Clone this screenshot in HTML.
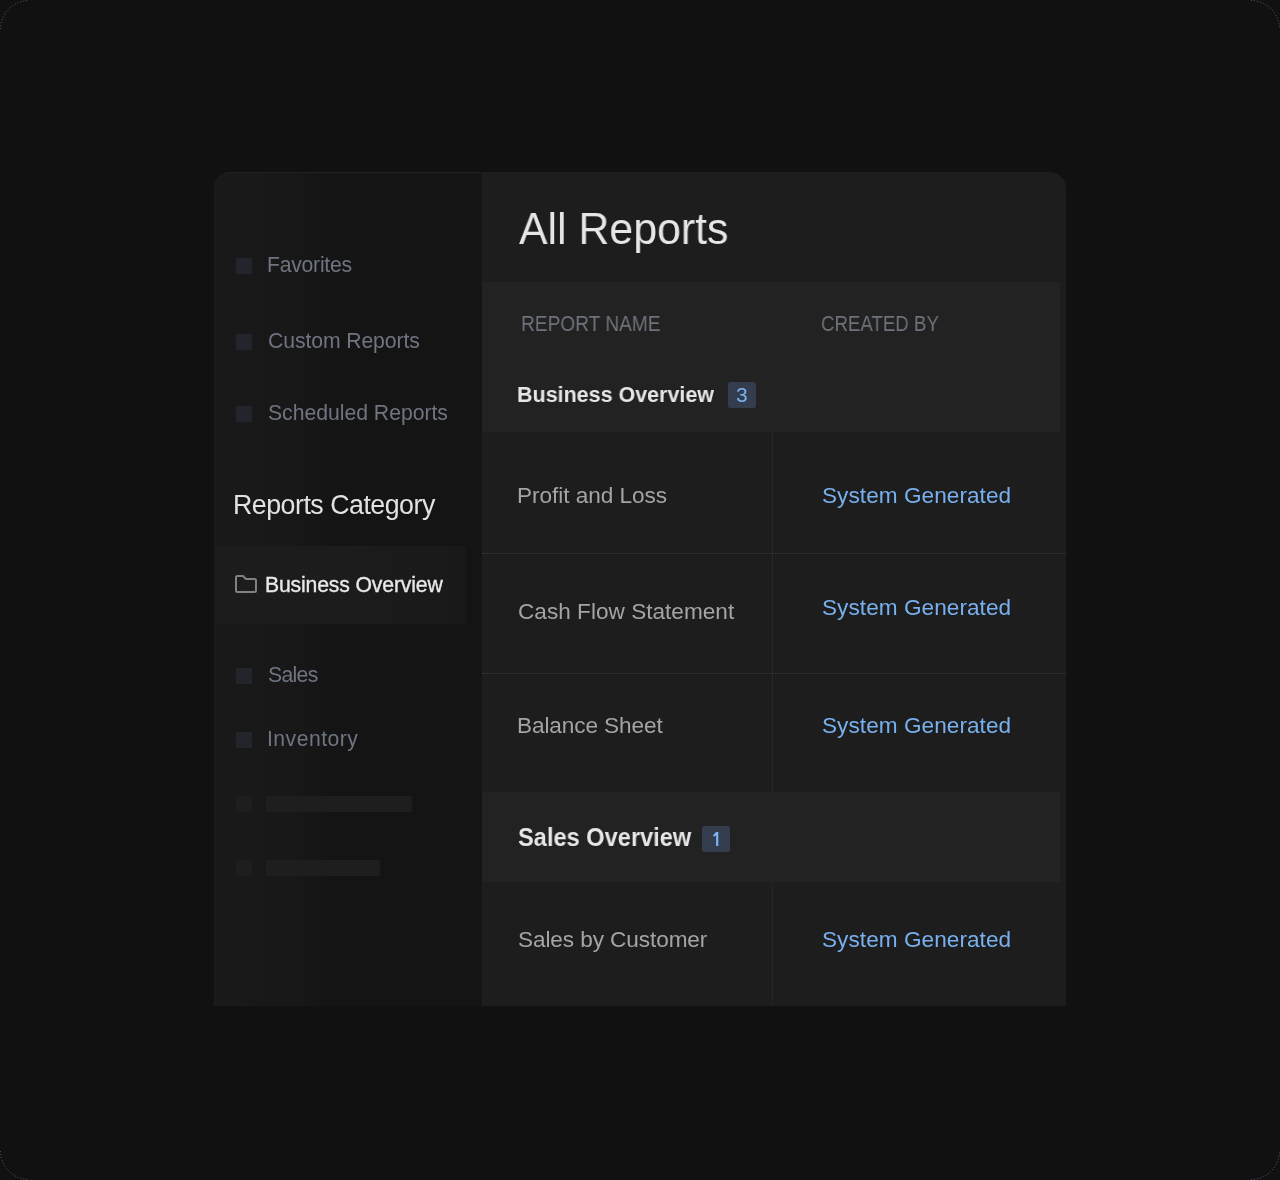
<!DOCTYPE html>
<html>
<head>
<meta charset="utf-8">
<style>
html,body{margin:0;padding:0;}
body{width:1280px;height:1180px;background:#111111;position:relative;overflow:hidden;font-family:"Liberation Sans",sans-serif;}
.a{position:absolute;}
.t{position:absolute;white-space:nowrap;line-height:1;will-change:transform;transform-origin:0 0;}
.band{background:#222222;}
.ico{position:absolute;width:16px;height:16px;background:#22252b;}
.sk{position:absolute;background:#1e1e1e;border-radius:2px;}
.badge{position:absolute;background:#333d4d;border-radius:2.5px;}
.hline{position:absolute;height:0;border-top:1px dotted #363b44;}
</style>
</head>
<body>
<svg class="a" style="left:0;top:0" width="1280" height="1180">
  <g fill="none" stroke="#55637a" stroke-width="1" stroke-dasharray="1 2">
  <path d="M0.5 29 A28.5 28.5 0 0 1 29 0.5"/>
  <path d="M1251 0.5 A28.5 28.5 0 0 1 1279.5 29"/>
  <path d="M0.5 1151 A28.5 28.5 0 0 0 29 1179.5"/>
  <path d="M1251 1179.5 A28.5 28.5 0 0 0 1279.5 1151"/>
  </g>
</svg>
<!-- card -->
<div class="a" style="left:214px;top:172px;width:852px;height:834px;border-radius:16px 16px 0 0;overflow:hidden;background:#1d1d1d;">
  <div class="a" style="left:0;top:0;width:267px;height:834px;background:#141414;"></div>
  <div class="a" style="left:0;top:0;width:267px;height:834px;background:linear-gradient(90deg,rgba(255,255,255,0.022) 0%,rgba(255,255,255,0.014) 30%,rgba(255,255,255,0) 45%);"></div>
  <div class="a" style="left:0;top:0;width:267px;height:834px;box-sizing:border-box;border-left:1px solid #1c1d20;border-top:1px solid #202124;border-radius:16px 0 0 0;"></div>
  <div class="a" style="left:267px;top:0;width:1px;height:834px;background:#161616;"></div>
</div>
<!-- sidebar -->
<div class="ico" style="left:236px;top:258px"></div>
<div class="ico" style="left:236px;top:334px"></div>
<div class="ico" style="left:236px;top:406px"></div>
<div class="a" style="left:216px;top:546px;width:250px;height:78px;background:linear-gradient(90deg,#1c1c1c 0%,#1c1c1c 50%,#191919 100%);"></div>
<svg class="a" style="left:234px;top:574px" width="24" height="20" viewBox="0 0 24 20">
  <path d="M2 3.5 Q2 2 3.5 2 L9 2 L12 5 L20.5 5 Q22 5 22 6.5 L22 16.5 Q22 18 20.5 18 L3.5 18 Q2 18 2 16.5 Z" fill="none" stroke="#7f8185" stroke-width="2" stroke-linejoin="round"/>
</svg>
<div class="ico" style="left:236px;top:668px"></div>
<div class="ico" style="left:236px;top:732px"></div>
<div class="sk" style="left:236px;top:796px;width:16px;height:16px;"></div>
<div class="sk" style="left:266px;top:796px;width:146px;height:16px;"></div>
<div class="sk" style="left:236px;top:860px;width:16px;height:16px;"></div>
<div class="sk" style="left:266px;top:860px;width:114px;height:16px;"></div>
<!-- main -->
<div class="a band" style="left:482px;top:282px;width:578px;height:150px;"></div>
<div class="badge" style="left:728px;top:382px;width:28px;height:26px;"></div>
<div class="a" style="left:772px;top:432px;width:1px;height:360px;background:#252525;"></div>
<div class="a" style="left:772px;top:882px;width:1px;height:124px;background:#252525;"></div>
<div class="hline" style="left:482px;top:553px;width:584px;"></div>
<div class="hline" style="left:482px;top:673px;width:584px;"></div>
<div class="a band" style="left:482px;top:792px;width:578px;height:90px;"></div>
<div class="badge" style="left:702px;top:826px;width:28px;height:26px;"></div>
<div class="t" style="left:519.30px;top:206.25px;font-size:45.06px;transform:scaleX(0.9506);font-weight:400;color:#e6e6e6">All Reports</div>
<div class="t" style="left:520.77px;top:312.55px;font-size:21.20px;transform:scaleX(0.9023);font-weight:400;color:#6e737b">REPORT NAME</div>
<div class="t" style="left:821.37px;top:312.55px;font-size:21.20px;transform:scaleX(0.8809);font-weight:400;color:#6e737b">CREATED BY</div>
<div class="t" style="left:517.41px;top:383.10px;font-size:22.80px;transform:scaleX(0.9423);font-weight:700;color:#e6e6e6">Business Overview</div>
<div class="t" style="left:267.05px;top:254.30px;font-size:21.20px;letter-spacing:-0.250px;font-weight:400;color:#6e7480">Favorites</div>
<div class="t" style="left:267.69px;top:330.25px;font-size:21.20px;letter-spacing:-0.094px;font-weight:400;color:#6e7480">Custom Reports</div>
<div class="t" style="left:267.90px;top:402.05px;font-size:21.20px;letter-spacing:-0.017px;font-weight:400;color:#6e7480">Scheduled Reports</div>
<div class="t" style="left:233.26px;top:491.66px;font-size:26.74px;letter-spacing:-0.483px;font-weight:400;color:#e2e2e2">Reports Category</div>
<div class="t" style="left:264.80px;top:574.05px;font-size:21.20px;letter-spacing:-0.152px;font-weight:400;color:#e8e8e8;-webkit-text-stroke:0.35px #e8e8e8">Business Overview</div>
<div class="t" style="left:267.95px;top:664.15px;font-size:21.20px;letter-spacing:-0.687px;font-weight:400;color:#6e7480">Sales</div>
<div class="t" style="left:266.89px;top:728.05px;font-size:21.20px;letter-spacing:0.476px;font-weight:400;color:#6e7480">Inventory</div>
<div class="t" style="left:517.19px;top:484.86px;font-size:22.60px;letter-spacing:-0.048px;font-weight:400;color:#a4a4a4">Profit and Loss</div>
<div class="t" style="left:517.87px;top:601.06px;font-size:22.60px;letter-spacing:0.013px;font-weight:400;color:#a4a4a4">Cash Flow Statement</div>
<div class="t" style="left:517.19px;top:714.96px;font-size:22.60px;letter-spacing:-0.104px;font-weight:400;color:#a4a4a4">Balance Sheet</div>
<div class="t" style="left:822.10px;top:484.76px;font-size:22.60px;letter-spacing:0.050px;font-weight:400;color:#78b0ee">System Generated</div>
<div class="t" style="left:822.10px;top:596.86px;font-size:22.60px;letter-spacing:0.050px;font-weight:400;color:#78b0ee">System Generated</div>
<div class="t" style="left:822.10px;top:714.76px;font-size:22.60px;letter-spacing:0.050px;font-weight:400;color:#78b0ee">System Generated</div>
<div class="t" style="left:518.23px;top:824.69px;font-size:25.29px;transform:scaleX(0.9339);font-weight:700;color:#e6e6e6">Sales Overview</div>
<div class="t" style="left:517.80px;top:928.66px;font-size:22.60px;letter-spacing:-0.095px;font-weight:400;color:#a4a4a4">Sales by Customer</div>
<div class="t" style="left:822.10px;top:928.66px;font-size:22.60px;letter-spacing:0.050px;font-weight:400;color:#78b0ee">System Generated</div>
<div class="t" style="left:736px;top:384px;font-size:21px;color:#78b2f0">3</div>
<svg class="a" style="left:702px;top:826px" width="28" height="26" viewBox="0 0 28 26"><path d="M14.1 6 L16.3 6 L16.3 20 L14.1 20 L14.1 8.9 L12.3 10.8 L10.9 9.5 Z" fill="#7ab6f4"/></svg>
</body>
</html>
